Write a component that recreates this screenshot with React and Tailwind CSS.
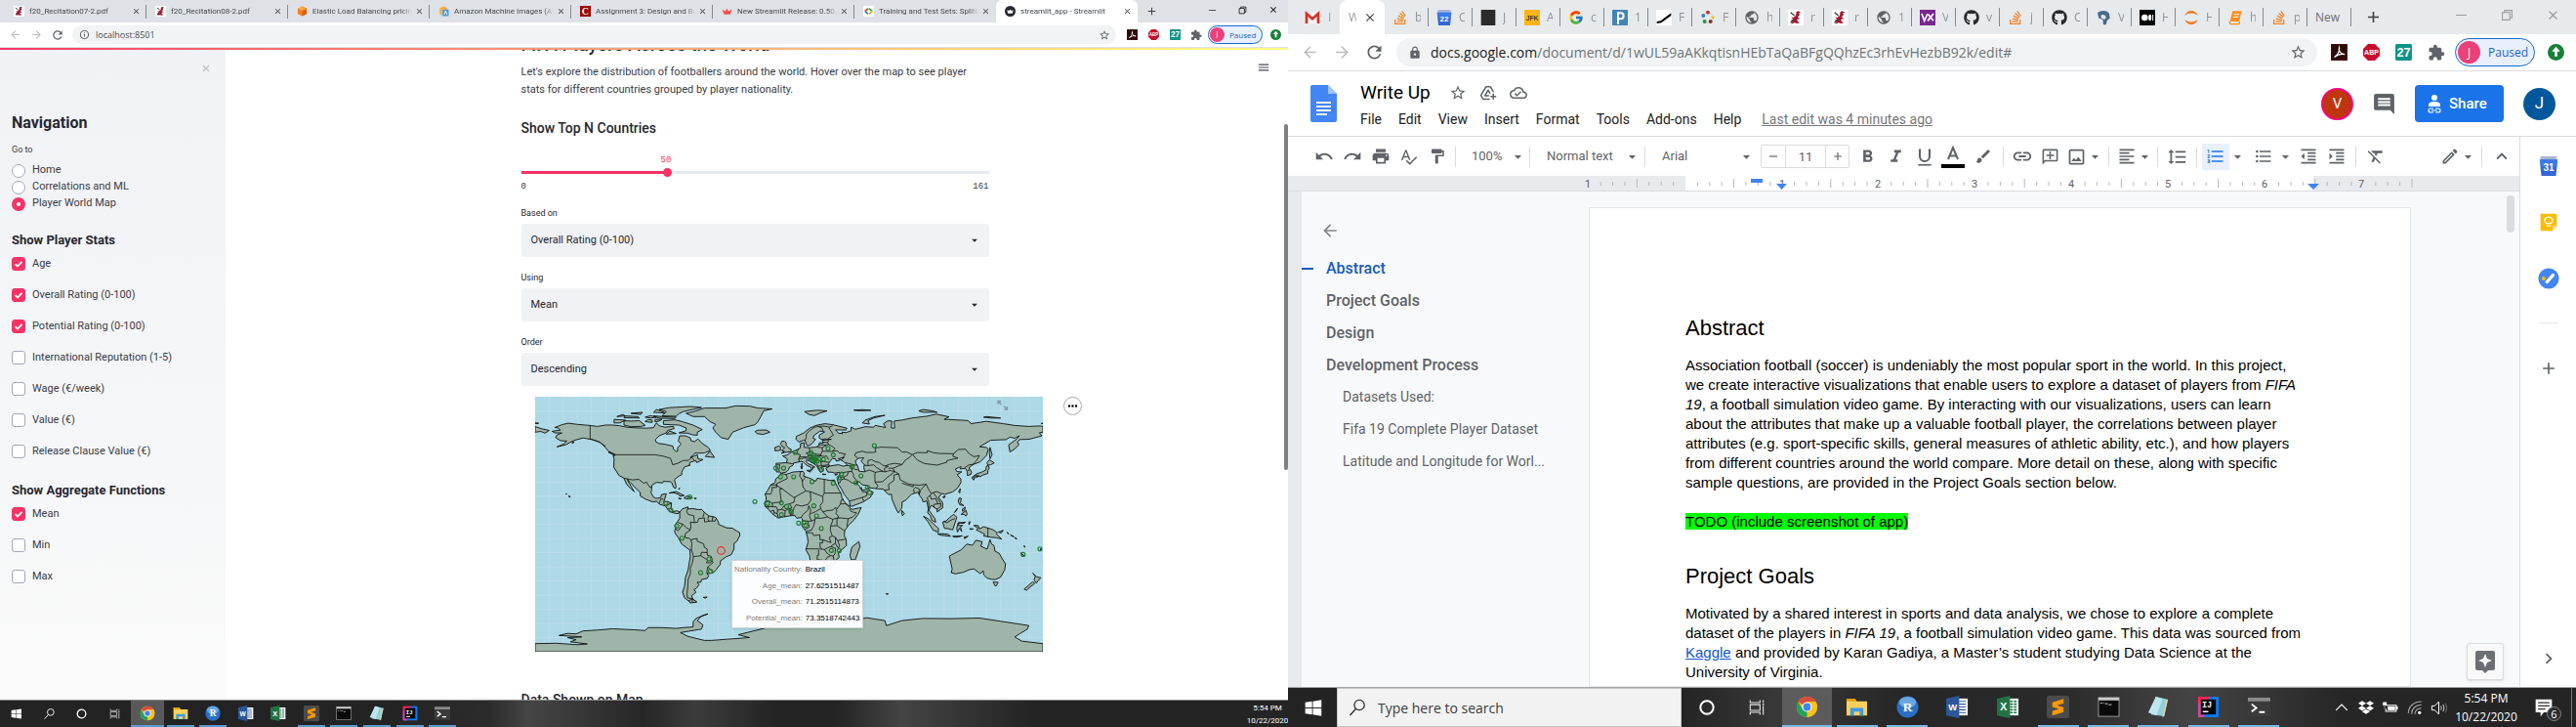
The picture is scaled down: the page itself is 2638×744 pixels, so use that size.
import React from "react";
import {
  MdUndo, MdRedo, MdPrint, MdSpellcheck, MdFormatPaint, MdFormatBold, MdFormatItalic, MdFormatAlignLeft,
  MdFormatLineSpacing, MdFormatListNumbered, MdFormatListBulleted, MdFormatIndentDecrease, MdFormatIndentIncrease,
  MdFormatClear, MdLink, MdArrowDropDown, MdExtension, MdStarBorder, MdLock, MdRefresh, MdArrowBack,
  MdArrowForward, MdAdd, MdClose, MdInfoOutline, MdOutlineCloudDone, MdAddToDrive, MdComment, MdOutlineImage,
  MdOutlineAddComment, MdOutlineEdit, MdKeyboardArrowUp, MdChevronRight, MdPublic, MdRemove, MdMenu, MdBrush,
} from "react-icons/md";
import { FaGithub, FaStackOverflow, FaDropbox } from "react-icons/fa";
import { FcGoogle } from "react-icons/fc";

/* ---------- world map ---------- */

const MAP_W = 520;
const MAP_H = 261;

function trace(points, closed) {
  const n = points.trim().split(/[\s,]+/).map(Number);
  let d = "";
  for (let i = 0; i < n.length; i += 2) {
    const x = ((n[i] + 180) / 360) * MAP_W;
    const y = ((90 - n[i + 1]) / 180) * MAP_H;
    d += (i ? "L" : "M") + x.toFixed(1) + " " + y.toFixed(1);
  }
  return closed ? d + "Z" : d;
}

const LAND = [
  "-168 65.6,-162 66.5,-164 68,-166 68.3,-161 70.3,-156.6 71.3,-150 70.5,-141 69.7,-136 69,-130 70,-125 70,-120 69.5,-115 68.5,-108 68,-101 67.8,-96 68.2,-94 71.5,-92 69.5,-88 68.5,-82 69,-81.5 67.5,-86 66.2,-87 64.5,-92 62.5,-94.5 60,-94.7 58.5,-92.5 57,-88 56.5,-82.3 55.1,-82 53,-80 51.3,-79 51.5,-79 54,-76.5 56.5,-78.5 58.8,-77.5 62.4,-73.5 62.4,-70 61,-69.5 59,-67 58.3,-64.5 60.2,-61.5 57,-57.5 54.5,-55.7 52.2,-60 50.2,-66.5 50.2,-70 47,-65 49,-64.5 46.2,-61 45.6,-65.5 43.5,-66 45,-70 43.8,-70.8 42,-70 41.7,-74 40.5,-75.5 38,-76 36.5,-76 35,-78 34,-81.2 31.5,-80 27,-80.5 25.2,-81.8 26,-83 29,-84 30,-89 30.3,-89.5 29.2,-94 29.5,-97.3 27.5,-97.5 24,-97.8 22.3,-96 19.2,-94.3 18.2,-91 18.8,-90.4 21,-87 21.5,-88 18.3,-88.8 15.9,-86 15.9,-83.3 15,-83.7 11,-82 9,-79.5 9.5,-77.5 8.6,-78.2 7.7,-80 7.5,-83 8.4,-85.7 10,-87.6 12.9,-91.4 13.9,-94 16.2,-96.5 15.7,-101.5 17.6,-105.5 20,-105.5 22.5,-109.3 26,-112.5 29.5,-114.7 31.7,-112.8 28,-110 23.5,-109.5 23,-112 25,-115 28,-117.1 32.5,-120.6 34.5,-122.5 37.5,-124.3 40.3,-124 46,-124.7 48.4,-122.8 49,-128 51.5,-130.5 54.5,-134 58,-139.9 59.8,-146 60.9,-151 59.5,-154 58.5,-158 56.2,-164.5 54.6,-160 56.5,-157.5 58.7,-162 59,-165.5 61.2,-164.5 63,-161 64.4,-166 64.5",
  "-77.5 8.6,-75.5 10.8,-71.7 12.3,-71.5 10.8,-68 11,-64 10.3,-61.9 10.5,-60 8.4,-57 6,-52 4.8,-50 1.5,-50 0,-44.5 -2.5,-40 -2.8,-37 -4.8,-35 -5.8,-34.8 -8,-37 -12,-39 -13.5,-39 -17.5,-41 -21.5,-44.5 -23,-48.5 -25.8,-48.8 -28.5,-52 -32.5,-53.8 -34.3,-57 -34.8,-58.4 -34,-57 -36.5,-58 -38.2,-62 -39,-62.5 -41,-65 -41,-63.8 -42.8,-65.5 -45,-67.5 -46.3,-65.8 -47.8,-69 -50.5,-68.3 -52.5,-66 -55,-70 -55,-74 -52,-75.5 -48,-74 -43.5,-73.5 -38,-71.5 -32,-70 -23,-70.3 -18.3,-76 -14,-78.5 -9.5,-81 -6,-81 -4.2,-80 -2.5,-81 -1,-79 2,-77.5 4.2,-77.5 7",
  "-6 35.8,-2 35.2,3 36.9,10 37.3,11 35.5,10.2 34,15.3 32.3,19 30.3,20 32.5,25 31.7,29 30.9,32.3 31.2,32.6 29.9,34 27,35.6 24,37.2 21,37.4 18.8,39.5 15.5,43 12.5,43.3 11.5,44.5 10.5,51.2 11.8,49 7,46 3,42 -1,39.5 -4.5,39.2 -8,40.6 -11,40.7 -15,35 -20,35.5 -23.5,33 -25.5,32.5 -28,28 -33,25.5 -34,20 -34.8,18.3 -33.5,15.3 -27,14.5 -22.5,12 -18,13.6 -12.5,13 -8.8,12 -5,9 -1,9.5 3.8,8.5 4.7,5.5 4.3,4 6.3,1 6,-4 5.2,-7.7 4.4,-11 6.7,-13.2 9,-15 11,-16.8 12.5,-17.5 14.7,-16.2 17,-16.3 19.5,-17 21,-15 24,-13 27.7,-9.8 29.5,-9.5 32,-6.8 34",
  "-9 38.7,-9.2 43,-1.8 43.4,-1.2 46,-4.5 48.3,-1.5 48.7,1.6 50.9,4.5 52,8 53.8,8.2 57,10.6 57.6,10.8 54.3,14 54,19 54.4,21.2 55.5,21.5 57.5,24.3 57.2,23.5 59.2,30 59.9,25 60.2,22.9 59.9,21.3 61,21.5 63,25.3 65.2,22 65.8,17.5 62.5,17 60.7,18.8 60,16.5 57,14.3 55.5,12.8 55.4,11.3 59,10.5 59.3,7 58,5 60,5.2 62,10.5 64.5,14.8 67.9,19.2 69.8,25.5 71,31 70.3,41 67.8,40.5 66.5,33 66.7,35 64.3,38 63.9,37.5 65,40.5 64.7,44 66,44 68.5,47 67,54 68.8,60 68.5,61 69.8,68.5 68.3,67 71,70 73,73 72.8,72.5 68,75 67.8,74.5 72.8,80.5 73.6,87 75,98 76.3,104.5 77.7,113.5 75.8,110 74,113 73.9,127 73.2,129 71,140 72.6,152 71,160 69.7,170 69,178 69.4,180 69,180 65,177.5 64.6,179.3 62.4,170.3 60,163.5 59.8,162 58,163 56,160 53.2,156.7 51,155.7 56,161.5 60.2,163.3 62.5,160 60.6,156.7 61.5,154 59.7,143 59.3,135.2 54.7,139.9 54.2,141.3 53,140 48.5,135.5 44,130.8 42.3,127.5 39.8,129.4 36.8,129 35.2,126.4 34.4,126.5 37,125 39.5,121.5 39,122 40.7,118 39,119 37.2,122.5 37,119.2 35,121.8 32,121.9 29.5,119.5 25.5,116 22.8,110.5 21.2,108.5 21.7,106 19,108.9 15.3,109 11.5,105 8.7,105 10.5,102.5 12.2,100.8 13.4,99.2 10,100.3 8.3,103.4 4,104 1.4,101.3 2.8,100.2 6,98.3 8,98.7 11,97.7 16.5,95 15.8,94.3 18,92.3 20.7,91.5 22.7,88.8 21.7,87 21.3,82.3 16.6,80.2 15.8,80 12,79.3 10.3,77.5 8,76.3 10,74.5 14,73 18,72.7 21.2,70.5 20.9,69 22.4,67 24.7,61.6 25.2,57.3 25.7,56.5 27.1,51.5 27.9,50 30,48 30,48 29.3,50.2 26.5,50.8 24.8,51.3 26,51.6 24.2,54 24.2,56.3 26.2,56.8 24.2,59.8 22.5,57.7 19,55.2 17.3,52.2 15.6,45 12.8,43.3 12.7,42.8 16.4,39 21.3,37.2 25,35 28.1,34.9 29.4,34.3 31.2,36 35.5,36 36.7,32.5 36.1,30.5 36.7,27.5 36.8,26.2 39.5,29 41.1,35 42,38.3 41,41.5 41.5,39 44,36.8 45.3,39.1 47.2,35 46.3,36.5 45.4,33.5 44.5,33 46.1,30.7 46.5,28.7 43.8,27.9 42.7,28.8 41.2,26.3 40.8,22.8 40.4,24 37.8,22.6 36.5,21.2 38.2,19.4 41.5,15.2 44.2,13.7 45,12.4 45.3,12.4 44,14 42.4,16 41.8,18.4 40.2,16.9 40.4,17 39,15.7 38,16 40,12.3 41.7,10.2 43.9,8.5 44.3,3.2 43.2,3 41.8,0 40,0 38.7,-2 36.8,-5.3 36.1,-6.4 36.8,-9 37",
  "-73 78.3,-66 80,-60 82,-45 82,-38 83.5,-28 83.4,-22 82,-12 81.4,-18 80,-20 76,-22 72.5,-24 70.3,-32 68.2,-40 65,-43 60,-48 61,-52 65,-54 68,-52 70.5,-56 72.5,-60 76,-68 76",
  "-24 65.5,-22 66.4,-16 66.5,-13.6 65,-18.5 63.4,-22.7 63.9",
  "-5.5 50.1,-3 50.7,1.4 51.3,1.6 52.8,0 53.5,-2 55.8,-2 57.6,-3.2 58.6,-5 58.6,-6 56.6,-4.8 54.8,-3 53.9,-4.5 52.8,-5.2 51.9,-3.2 51.4",
  "-6 52.2,-6 54.5,-7.5 55.2,-10 54.2,-10 51.8",
  "-61.5 66.8,-65 65,-65 62.8,-68 63,-72 64.3,-78 64.5,-73 66,-73 68,-78 70,-89 70.5,-89 73,-81 73.7,-76 72.5,-68 70",
  "-62 82.4,-70 83.1,-85 82.3,-92 81,-87 79.5,-90 76.5,-80 76.2,-78 78,-75 79.5",
  "-117 70,-112 68.8,-105 69,-102 69.8,-106 73,-112 72.8,-117 73",
  "-124 71.5,-124 74,-116 73.5,-120 71.5", "-80 75.5,-90 76,-96 76.5,-92 74.8,-81 74.6",
  "-106 75,-117 75.2,-116 76.4,-107 76", "-97 71.8,-102 72.5,-100 73.9,-97 73.5", "-92 72.8,-95 72.3,-95 74,-90 74",
  "-88 78.5,-96 79,-94 81,-91 80", "-84.5 65.8,-80 64,-87 63.6", "-105 77.5,-112 78.3,-104 79", "-98 75,-102 75.6,-98 76.6,-94 75.5",
  "-116 76.5,-122 76,-118 77.4", "-56 51.6,-52.8 47.2,-59.3 47.8", "-123.5 48.4,-128 50.8,-125.5 50.2",
  "-85 22,-80 23.1,-74.3 20.2,-77.5 19.9,-78 21,-82 22.3", "-74.4 18.4,-72.5 19.9,-68.5 18.6,-71.5 17.8",
  "-78.3 18.4,-76.3 18.1,-77.5 17.8", "-67.2 18.4,-65.6 18.3,-67 18", "-78 24.5,-77.5 25.5,-78.2 25",
  "49.5 -12.2,50.3 -15.8,47 -25,44 -25,43.3 -22,44.5 -16.2", "80 9.7,81.8 7.5,80.5 6,79.8 8",
  "95.3 5.6,98.5 4,103.8 -1,106 -3,105.8 -5.8,102 -4,98.5 1.8", "105.3 -6.8,108.6 -6.7,112.7 -7,114.5 -8.5,108 -7.8",
  "109 1.5,111.5 2.5,114 4.8,116.7 7,119 5,117.7 1,116 -4,113 -3.2,110.2 -2.9",
  "119.5 -5.5,120.8 -2.8,122.5 -5,121.5 -1.8,123 -.9,120.2 -.8,120.2 .9,125 1.5,124 .5,120 1.2,118.9 -2.8",
  "116 -8.4,119 -8.4,122.8 -8.2,120 -9,116.5 -9", "124 -9.2,127 -8.4,124.5 -10.2", "127.6 -.4,128.4 1.8,127.5 1.5", "128 -3.2,130.6 -3.3,129 -3.6",
  "131 -.8,134 -.9,135 -3.3,138 -1.7,144.5 -3.8,147.8 -6.1,147 -6.8,150.8 -10.5,147 -9.5,143 -9.2,138 -8.3,138.7 -7,132.8 -4,134 -2.8",
  "148.5 -5.6,151.8 -4.3,150.5 -6.2", "154.7 -5.6,155.8 -6.8,155 -6.4", "157 -7.5,159.5 -8.8,158 -8.2", "160.5 -9.3,161.5 -10.4,160 -9.8", "164.2 -20.2,166.8 -22.2,165 -21.4", "166.7 -15,167.3 -16.2,166.8 -16",
  "113.7 -22.5,115.7 -31.5,115 -34.2,118 -35,123.5 -33.9,128 -32,131 -31.5,135.6 -34.8,137.8 -32.8,138 -35.6,140.5 -38,143.5 -38.8,146.3 -39,150 -37.4,153 -32,153.5 -28,151 -24,149 -20.5,146 -19,145.3 -15,143.6 -14,142.5 -10.8,141.6 -14,140.5 -17.6,136 -15.5,137 -12.3,132.5 -11.3,130 -14.8,126 -14,122.2 -18,117 -20.7",
  "144.7 -40.8,148.3 -41,147 -43.5,146 -43.4", "172.8 -34.5,175.5 -37,178.5 -37.7,175.3 -41.6,173.8 -39.2,174.6 -36.8", "172.7 -40.6,174.2 -41.8,171 -44.3,168.4 -46.6,166.7 -45.8",
  "142 45.5,145.5 43.3,143 42,141 41.7,140.3 43.3", "141.4 41.4,142 39.5,141 38,140.8 35.7,137 34.6,135.7 33.5,133 34.3,131 34,133 35.5,137 37,139.5 38.2,140 41",
  "130 33.5,131.8 33.3,131 31.2,130 32", "132.5 33.8,134.5 34.2,133 32.8", "142.5 54.3,144 49,142.5 46.2,142 51", "121.5 25.2,121 22,120.2 23.2",
  "120.6 18.5,122.2 18.3,121.5 15,124 13,121 13.8,120 16", "122 7,125.5 9.8,126.3 7,125.5 5.8,124 7", "123 10.8,125 12,124.5 10,123 9.2", "117.2 8.3,119.5 11.3,118.5 9.4", "108.8 19.3,110.8 20,110 18.4",
  "52 71.5,57 70.7,56 73,60 75,68 76.9,61 76,54 73.5", "11 79.5,20 80.5,27 80,22 78.5,18 76.7,14 77.5", "46 80.5,52 80.8,58 80.4,50 80.1", "95 79,105 79,102 80,95 81,92 80", "138 75.5,143 75,150 75,140 76", "178.7 71,179.9 71.5,179.9 70.9",
  "-180 68.9,-175 67.3,-170 66.2,-173 64.3,-176 65.5,-180 65", "-180 71.5,-177.5 71.3,-180 70.9",
  "12.5 38,15.5 38.2,15 36.8", "8.3 41,9.7 41,9 39", "8.7 42.7,9.4 43,9.2 41.5", "23.6 35.5,26.2 35.2,24 35", "32.4 35,34.5 35.6,33.5 34.6",
  "-156 20.2,-155 19.4,-155.8 19", "-158.2 21.6,-157.5 21.3,-158 21.2", "-61 -51.6,-58 -51.4,-59.5 -52.2", "68.8 -49,70.4 -49.2,69.5 -49.6", "-154 57.8,-152.3 58,-153.5 57", "178 -17.5,179.2 -16.8,178.5 -18.2",
  "-68.5 -52.7,-65.3 -54.8,-70 -55.6,-71 -54",
  "-180 -84.3,-165 -84,-150 -85,-143 -84.5,-155 -83,-151 -81.5,-157 -80,-147 -79.5,-163 -78.5,-157 -77,-151 -77.4,-146 -75.3,-136 -74.7,-125 -73.8,-110 -74.5,-102 -75,-100 -73,-90 -73,-80 -73.5,-75 -73,-68 -72.5,-68 -69,-66 -66.5,-60 -64,-57.5 -63.3,-62 -65,-65 -68,-61 -71,-62 -74,-77 -76.5,-72 -79,-60 -82,-55 -82,-44 -81.2,-28 -80,-36 -78,-18 -73.5,-10 -71,0 -71,15 -69.5,32 -69.5,40 -68.8,48 -67.5,55 -66,68 -68,69 -71.5,80 -68,95 -66.5,115 -66.6,135 -66.2,150 -68.5,162 -70.3,170 -71.5,169 -74,164 -77,160 -79.5,165 -82.5,180 -84.3,180 -90,-180 -90",
];

const BORDERS = [
  "-51.6 4.2,-52.5 2.2,-56 2.3,-59.8 1.5,-60 4.5,-64 4,-64.8 1.5,-67 1.2,-70 1.5,-69.5 -1,-70 -4.2,-73.5 -6.5,-73.8 -9.4,-70.6 -10,-69.5 -11,-65.3 -10,-65 -12,-60.5 -13.8,-60 -16.3,-58 -17.5,-58 -20,-57.8 -22,-55.5 -22.5,-54.5 -24.5,-54.6 -25.6,-53.8 -27,-57.6 -30.2,-53.5 -33.7",
  "-71.5 12,-72.5 9,-71.5 7,-67.5 6,-67.3 3.5,-67 1.2", "-60 8.4,-60.5 7,-61 5", "-57 6,-57.5 3.5,-56.5 2", "-54 5.8,-54.5 2.3", "-78.8 1.3,-75.3 0,-73 -2.3,-70 -4.2", "-80.3 -3.5,-78.5 -4.5,-75.3 0",
  "-69.5 -11,-68.8 -14,-69.3 -17.5,-70.3 -18.3", "-69.3 -17.5,-68.5 -20,-67.8 -22.8,-64.5 -22.5,-62.6 -22.2,-62 -19.8,-58 -20", "-62.6 -22.2,-57.6 -25.4,-58.6 -27.2,-55.8 -27.3,-54.6 -25.6",
  "-67.8 -22.8,-68.5 -27,-70 -31,-70 -35,-71.5 -39,-71.7 -44,-72.3 -49,-72 -52,-68.5 -52.5,-68.6 -55", "-57.6 -30.2,-58.2 -33.5",
  "-122.8 49,-95 49,-89 48,-84 46.5,-82.5 42,-79 43,-75 45,-71 45.2,-69 47.3,-67 45", "-141 69.7,-141 60.3,-137 59,-133 57,-130 55", "-117.1 32.5,-111 31.3,-106.5 31.7,-103 29,-101 29.7,-99 26.4,-97.3 25.9",
  "-92.2 14.5,-91.5 16,-91 17.8,-89 17.8", "-89.3 14.4,-88.3 15.7", "-87.3 13,-83.2 15", "-85.6 11.1,-83.7 11", "-83 8.2,-82.6 9.6",
  "-2 35.2,-1.2 32.3,-8.7 28.7,-8.7 27.3", "-13 27.7,-8.7 27.7,-8.7 26,-12 26,-12 23.4,-13 21.3,-17 21.3", "-8.7 27.3,-4.8 25,-6.5 25,-5.5 15.5,-9.5 15.3,-12 14.8,-14.5 16.5,-16.5 16", "-4.8 25,3.2 19,4.2 19.2,12 23.5", "8.2 36.9,7.5 34,9 32,9.5 30.2", "9.5 30.2,9.8 26.5,12 23.5", "11.5 33.2,10 31,9.5 30.2",
  "12 23.5,15 23,24 19.5", "25 31.7,25 22,24 20", "25 22,36.9 22", "24 19.5,24 15.7,22 13,22.5 11,24 8.7", "24 8.7,27 9.6,31 10,33 12,34 9,33 8,35.3 5.2,34 4.2", "15 23,15.5 17,13.5 14", "3.6 11.7,5 13.8,9 12.8,13.5 14", "14 13,13.5 10,10 7,8.5 4.7",
  "2.7 6.3,2.8 9,3.6 11.7", "1.6 6.2,1.5 9,.9 11", "1.1 6,0 11", "-3 5.1,-2.8 9.5", "-5.5 10.4,-2.8 9.6,0 11,2 11.5,.5 14.5,-3 13.5,-5.5 10.4", ".5 14.5,3.5 15.5,4.2 19.2", "-7.5 4.4,-8.4 7.5,-8 10,-5.5 10.4", "-8 10,-9 12.3,-11.5 12.3,-12 14.8", "-15 11,-13.7 12.6,-11.5 12.3", "-16.7 12.4,-13.7 12.6", "-13.2 9,-11 10,-10.5 8.3,-11.4 6.8", "-10.5 8.3,-8.4 7.5",
  "14 13,15.5 10,14.5 6,16 2.2", "15.5 7.5,19 9,22.5 11", "9.7 2.3,13.2 2.2,16 2.2,18.5 3.5,18.6 4.4,22.5 4.2,27.4 5.1,24 8.7", "18.5 3.5,17.7 -.5,16 -4,12.5 -5", "13.2 2.2,14.4 -1.9,11.2 -3.9", "12.3 -6,16.5 -6,17.5 -8,21.8 -7.5,22 -11,24 -11,28.3 -12.5,29.8 -13,28.5 -9.3,30.7 -8.3", "27.4 5.1,30.8 3.5,31 2.3,29.7 -.5,29.2 -4,30.7 -8.3", "30.8 3.5,34 4.2,34 -1,29.6 -1.3", "34 4.2,36 4.5,41 4,42 4,41 -1.5", "34 -1,39.3 -4.6", "30.7 -8.3,33 -9.4", "34.5 -11.5,40.4 -10.5", "33 -9.4,32.8 -13.6,35 -17,35.8 -15,34.5 -11.5,33 -9.4", "32.8 -13.6,30.2 -15,30.4 -16",
  "25.2 -17.8,28.8 -16,30.4 -16,33 -17,32.5 -21,31.3 -22.4,29.4 -22.2,27 -20.5,25.2 -17.8", "24 -11,24 -13,22 -13,22 -16.2,23.4 -17.6,25.2 -17.8", "11.8 -17.3,14 -17.4,18.5 -17.4,23.4 -17.6", "21 -18.3,21 -22,20 -22,20 -28.4,16.5 -28.6", "20 -25,23 -25.3,25.6 -25.6,27 -23.5,29.4 -22.2", "31.3 -22.4,32 -26", "27 -29.5,29 -28.8,28.5 -30.5,27 -29.5",
  "42 4,45 5,48 8,44 9,42.8 11", "38.5 18,37 17,36.5 14.3,40 14.5,42.5 12.5", "36.5 14.3,34 10.6",
  "-8.8 41.9,-6.5 41.9,-7.2 37.2", "-1.8 43.4,3.2 42.5", "2.5 51,6 49.5,8 49,7.5 47.5,6.8 46,7.5 43.8", "7 53.3,6 51.8,6 49.5", "14.3 54,15 51,12.2 50.3,13.8 48.7,13 47.5,9.6 47.5,7.5 47.5", "6.8 46,9.6 46.5,10.4 46.8,13.7 46.5,16 46.8,17 48,13.8 48.7", "15 51,18.8 49.6,22.6 49.1,23.6 51.5,23.6 54,19.8 54.4", "17 48,22.1 48.4,22.6 49.1", "22.1 48.4,20.2 46.2,16.5 46.5", "22.1 48.4,24.9 47.8,26.6 48.3,28.2 45.5", "20.2 46.2,22.6 44.2,28.6 43.7", "22.6 44.2,23 41.4,26.3 41.7,28 42", "19 45.2,19.5 43,20.6 41,21 39", "13.7 45.5,16.5 46.5,19 45.2", "16 45,18.5 42.5", "23 41.4,20.6 41",
  "23.6 51.5,30.5 51.4,34 52,35.5 50.4,40 49.6,38.2 47.1", "23.6 54,26.6 55.7,28.2 56.2,31 54.7,32.6 53.3,30.5 51.4", "21 56.2,26.6 55.7", "24.3 57.9,27.5 57.5,28.2 56.2", "27.5 57.5,28 59.4", "27.8 60.5,31.5 62.9,29 66.9,28.5 68.5,31 69.6", "24.2 65.8,23.5 67.8,20.6 69.1", "11.3 59,12.3 61.5,12.2 63.5,14.5 66,18 68.4,20.6 69.1,25.7 69.2,28.5 68.5",
  "41.5 41.5,43.5 41.1,44.8 39.7,44.5 37.2,42.4 37.2,36.7 36.2", "40 43.5,46.5 41.8,48.5 41.8", "43.5 41.1,46.5 41.2", "44.8 39.7,46.5 38.9,48.9 38.4", "42.4 37.2,41.2 34.5,38.8 33.4,35.8 33", "38.8 33.4,39 32,37 31.5,36 29.2,35 29.4", "39 32,42 31.1,44.7 29.2,47.5 29,48.4 28.5", "44.5 37.2,46 35,45.5 33.9,47.8 31,48.5 30", "42.8 16.4,46 17.2,52 19,55 20,55.2 22.7,56 24", "52 19,53 16", "51.6 24.2,52 23,55.2 22.7",
  "53.9 37.3,57 38.2,61.2 36.6,60.8 34,61 31.5,60.9 29.8,63 27,61.6 25.2", "61.2 36.6,65 37.4,68 37,71.5 37.9,74.9 37.2,71 34,69.5 33,66.4 30,60.9 29.8", "53 41.8,56 41.3,60 42,62 40,66.5 37.4", "56 41.3,56 45,58.6 45.6,61 44.3,64 43.6,66 42,68 41,71 42.3", "68 41,70.5 40.9,67.5 39.2,68 37", "70.5 39.6,73.7 39.5,74.9 37.2", "71 42.3,75 43,80.2 42.2,73.7 39.5",
  "49 46.5,46.5 48.4,47.5 50.5,52 51.5,55 50.7,59.5 50.6,61.5 51,61 53.8,65 54.4,71 54.2,77 54,80 51,83.5 51,87.3 49.2,85.5 47.2,82.5 45.3,80.2 42.2", "87.3 49.2,91 50.6,98 50.5,98.2 52,102.3 50.5,107 49.9,116.7 49.8,120 52.7,125 53,127.5 50,131 47.7,135 48.4,133 45,131 43,130.7 42.3", "87.8 48.9,91 45.3,96 42.8,105 41.7,111.8 43.7,112 45,119.8 46.7,116 48,116.7 49.8",
  "67.5 24,71 24.4,70.5 28,74.5 31,74.4 34.7,77.8 35.5,78.8 31.5,81 30.2,85 28.3,88.1 27.9,92 27.5,97.3 28.2", "80 29,88 26.4,88.1 27.9", "74.9 37.2,77.8 35.5", "89 22,88.2 24.5,89.8 26,92.3 25,92.3 21", "97.3 28.2,95 26,93.3 24,92.3 21", "97.3 28.2,98.7 25,101 21.5,100 20.4,97.8 18.5,98.9 16.4,99.2 14,99 11", "101 21.5,102.2 22.4,105 23,108 21.6", "102.2 22.4,104 20,105 18.5,107.5 15,107.5 12.3,104.5 10.4", "100 20.4,101 17.6,104 18.3,105.5 14.4,102.5 14,102.9 11.7", "105.5 14.4,107.5 14.4", "124.4 40,128 42,130.7 42.3", "126.7 37.8,128.4 38.6", "141 -2.6,141 -9.1", "109.6 2,112 1.2,115 3,117.7 4.1",
];

const CASPIAN = "47 44.8,49.5 46.6,53 46.8,51 44.5,53.5 42,53 40,53.8 37,49.5 37.5,49 40.3,47.5 43";

/* player nationality points, longitude and latitude */
const POINTS = [
  [60.5, 55.5], [27.7, 53.4], [31.4, 48.9], [4.4, 50.7], [15.5, 50.7], [16.5, 46.6], [17.9, 47.9], [18.9, 46], [20, 44.7], [17.4, 44.7], [21.3, 46],
  [15.5, 47.5], [16.5, 45], [24.5, 45.8], [23.2, 38.7], [-9.4, 39.6], [-3.8, 39.6], [-6, 33.4], [3.3, 33.4], [16.3, 30], [31.4, 28.9], [35.4, 32.8], [37.2, 35.5],
  [44.6, 40.6], [47.5, 29.3], [51, 34.1], [55.5, 25.9], [57.1, 22.2], [-24.2, 16], [-15.2, 14.6], [-5.4, 15.1], [-1.7, 12.5], [-5.4, 6.8], [1.2, 9.1],
  [17.6, 13], [19.5, 5.9], [6.8, 0.8], [10.7, 1.3], [11.8, -0.8], [22.9, -2.9], [30, -18.5], [35.6, -18.7], [-70.3, 19.2], [-87.3, 14.8], [-83.8, 10],
  [-79.6, -1.3], [-75.9, -9.8], [-56.8, -24.5], [-62.7, -34.1], [-55.8, -33.2], [166, -21.3], [177.9, -17.4],
];

function WorldMap() {
  const grid = [];
  for (let lon = -170; lon < 180; lon += 10) grid.push(`M${(((lon + 180) / 360) * MAP_W).toFixed(1)} 0V${MAP_H}`);
  for (let lat = -80; lat < 90; lat += 10) grid.push(`M0 ${(((90 - lat) / 180) * MAP_H).toFixed(1)}H${MAP_W}`);
  return (
    <svg viewBox={`0 0 ${MAP_W} ${MAP_H}`} className="block w-full" role="img" aria-label="World map of player nationalities">
      <rect width={MAP_W} height={MAP_H} fill="#add8e6" />
      <path d={grid.join("")} stroke="#fff" strokeOpacity=".15" fill="none" strokeWidth="1" />
      <g fill="#9fb5a9" stroke="#0b0f0c" strokeWidth=".9" strokeLinejoin="round">
        {LAND.map((p, i) => <path key={i} d={trace(p, true)} />)}
        <path d={trace(CASPIAN, true)} fill="#add8e6" />
      </g>
      <g fill="none" stroke="#0b0f0c" strokeWidth=".8" strokeLinejoin="round">
        {BORDERS.map((p, i) => <path key={i} d={trace(p, false)} />)}
      </g>
      <g fill="none" stroke="#1c7a2c" strokeWidth="1.1">
        {POINTS.map(([lon, lat], i) => (
          <circle key={i} cx={((lon + 180) / 360) * MAP_W} cy={((90 - lat) / 180) * MAP_H} r="2" />
        ))}
      </g>
      <circle cx="190.5" cy="157.5" r="3.8" fill="none" stroke="#e8302c" strokeWidth="1.2" />
      <g stroke="#7c9aa5" fill="none" strokeWidth="1.3">
        <path d="M474 7.500v-3h3M474.500 5l3 3M483.500 10v3h-3M483 12.500l-3-3" />
      </g>
    </svg>
  );
}

/* ---------- small icons ---------- */

const Svg = ({ className = "size-4", box = 24, children }) => (
  <svg viewBox={`0 0 ${box} ${box}`} className={`${className} shrink-0`} aria-hidden="true">{children}</svg>
);
const Label = ({ x = 12, y = 17, size = 13, fill = "#fff", weight = 700, family = "Liberation Sans, sans-serif", children }) => (
  <text x={x} y={y} fontSize={size} fill={fill} fontWeight={weight} fontFamily={family} textAnchor="middle">{children}</text>
);

const Griffin = ({ className }) => (
  <Svg className={className}>
    <rect width="24" height="24" fill="#fff" />
    <path d="M13 3l3-1 4 2-3 1 1 3-3 3 4 4-4-1-1 3 4 3-4 1-4-1-5 2 2-4-3-2 4-1-3-4 3 1 4-3z" fill="#a31932" />
    <path d="M4 4l6 5M4 20l5-5" stroke="#3c3c3c" strokeWidth="2" />
  </Svg>
);
const Cube = ({ className }) => (
  <Svg className={className}><path d="M12 1l10 5v12l-10 5L2 18V6z" fill="#f58220" /><path d="M12 1v22l10-5V6z" fill="#d9650b" /><path d="M12 1l10 5-10 5L2 6z" fill="#fca94c" /></Svg>
);
const Ami = ({ className }) => (
  <Svg className={className}><path d="M3 5l9-4 8 4v3H8v14l-5-3z" fill="#f2a93b" /><rect x="9" y="8" width="14" height="15" rx="2" fill="#4c9ad0" /><path d="M13 19l3-8 3 8" stroke="#fff" strokeWidth="2" fill="none" /></Svg>
);
const Canvas = ({ className }) => (
  <Svg className={className}><rect width="24" height="24" fill="#990000" /><Label y={20} size={22} family="Liberation Serif, serif">C</Label></Svg>
);
const Crown = ({ className }) => (
  <Svg className={className}><path d="M1 8l7 4 4-6 3 6 8-4-4 11H6z" fill="#ff4b4b" /></Svg>
);
const Devs = ({ className }) => (
  <Svg className={className}><rect width="24" height="24" rx="3" fill="#fff" /><path d="M11 6L4 12" stroke="#ea4335" strokeWidth="4" /><path d="M4 12l7 6" stroke="#4285f4" strokeWidth="4" /><path d="M13 6l7 6" stroke="#34a853" strokeWidth="4" /><path d="M20 12l-7 6" stroke="#fbbc04" strokeWidth="4" /></Svg>
);
const StreamlitDot = ({ className }) => (
  <Svg className={className}><circle cx="12" cy="12" r="12" fill="#262730" /><path d="M5 9l4 2 3-3 3 3 4-2-2 8H7z" fill="#fff" /></Svg>
);
const Acrobat = ({ className }) => (
  <Svg className={className}><rect width="24" height="24" fill="#2b0a08" stroke="#8f1d14" /><path d="M5 19c5-3 8-9 7-14-2 5 3 10 8 10-5-1-10 0-15 4z" fill="none" stroke="#fff" strokeWidth="1.8" /></Svg>
);
const Abp = ({ className }) => (
  <Svg className={className}><path d="M7 0h10l7 7v10l-7 7H7l-7-7V7z" fill="#c70d2c" /><Label y={16} size={10}>ABP</Label></Svg>
);
const TwentySeven = ({ className }) => (
  <Svg className={className}><rect width="24" height="24" rx="2" fill="#0d9488" /><Label y={18} size={18}>27</Label></Svg>
);
const Gmail = ({ className }) => (
  <Svg className={className}><rect x="1" y="4" width="22" height="17" rx="2" fill="#f5f5f5" /><path d="M3 21V6l9 8 9-8v15" fill="none" stroke="#d93025" strokeWidth="4" /></Svg>
);
const Calendar = ({ className, day }) => (
  <Svg className={className}><path d="M2 0h20v5H2z" fill="#a9b7d3" /><path d="M1 4h22l-2 20H3z" fill="#3367d6" /><path d="M1 4h22l-1 9H2z" fill="#4285f4" opacity=".6" /><Label y={18} size={12}>{day}</Label></Svg>
);
const Update = ({ className }) => (
  <Svg className={className}><circle cx="12" cy="12" r="12" fill="#188038" /><path d="M12 4l6 7h-4v7h-4v-7H6z" fill="#fff" /></Svg>
);
const Chrome = ({ className }) => (
  <Svg className={className}>
    <circle cx="12" cy="12" r="11" fill="#fbc116" />
    <path d="M12 12L2.500 6.500A11 11 0 0 1 21.500 6.500H12z" fill="#dd4b3e" />
    <path d="M12 12L12 23A11 11 0 0 1 2.500 6.500L7.500 14.500z" fill="#1ea362" />
    <path d="M12 6.500h9.500A11 11 0 0 1 12 23l4.700-8z" fill="#fbc116" />
    <circle cx="12" cy="12" r="5.300" fill="#fff" /><circle cx="12" cy="12" r="4.100" fill="#4285f4" />
  </Svg>
);

const Windows = () => <Svg className="size-full"><path d="M3 5.500l8-1.200v7.200H3zM12 4.200L22 2.700v8.800H12zM3 12.500h8v7.200l-8-1.200zM12 12.500h10v8.800l-10-1.500z" fill="#fff" /></Svg>;
const SearchGlass = ({ color = "#fff" }) => <Svg className="size-full"><circle cx="14.500" cy="9" r="6.200" fill="none" stroke={color} strokeWidth="1.600" /><path d="M10.300 13.500L3 21.500" stroke={color} strokeWidth="1.700" /></Svg>;
const CortanaRing = () => <Svg className="size-full"><circle cx="12" cy="12" r="8" fill="none" stroke="#fff" strokeWidth="2.400" /></Svg>;
const TaskView = () => <Svg className="size-full"><path d="M4 3v3h12V3M4 21v-3h12v3M4 8.500h12v7H4zM20 3v3M20 10v11" fill="none" stroke="#e8e8e8" strokeWidth="1.300" /><path d="M19 7h2v2h-2z" fill="#e8e8e8" /></Svg>;
const Explorer = () => <Svg className="size-full"><path d="M1 3h9l2 3h11v15H1z" fill="#ffd15c" /><path d="M1 3h9l2 3H1z" fill="#e0a110" /><path d="M5 21v-8h14v8h-4v-4H9v4z" fill="#3d9be0" /></Svg>;
const RStudio = () => <Svg className="size-full"><circle cx="12" cy="12" r="11.500" fill="#2a6fc4" /><ellipse cx="12" cy="7" rx="9" ry="6" fill="#8fc1ef" opacity=".65" /><Label y={17} size={14} family="Liberation Serif, serif">R</Label></Svg>;
const Word = () => <Svg className="size-full"><rect x="12" y="3" width="11" height="18" fill="#fff" /><path d="M14 6h7M14 9h7M14 12h7M14 15h7M14 18h7" stroke="#2b579a" strokeWidth="1.200" /><path d="M0 3l14-3v24L0 21z" fill="#2b579a" /><Label x={7} y={16} size={10}>W</Label></Svg>;
const Excel = () => <Svg className="size-full"><rect x="12" y="3" width="11" height="18" fill="#fff" /><path d="M14 6h3M18 6h3M14 9h3M18 9h3M14 12h3M18 12h3M14 15h3M18 15h3M14 18h3M18 18h3" stroke="#217346" strokeWidth="1.800" /><path d="M0 3l14-3v24L0 21z" fill="#217346" /><Label x={7} y={16} size={11}>X</Label></Svg>;
const Sublime = () => <Svg className="size-full"><rect width="24" height="24" rx="2" fill="#4b4b4b" /><path d="M18 3.500v4.500l-7 2.300 7 2.200v5L6 21v-4.500l7-2.300-7-2.200V7z" fill="#ff9800" /></Svg>;
const Cmd = () => <Svg className="size-full"><rect x="1" y="2" width="22" height="20" fill="#0a0a0a" stroke="#9a9a9a" /><rect x="1" y="2" width="22" height="3" fill="#c9c9c9" /><path d="M3 8h2M6 8h1M8 8.500h3M12 9.500h3" stroke="#ddd" /></Svg>;
const Notepad = () => <Svg className="size-full"><path d="M9 1l13 3-4 18-14-2z" fill="#8ed0dc" /><path d="M9 1l7 2-6 18-9-3z" fill="#bfe6ec" /><path d="M22 4l-4 18-2 1 4-18z" fill="#e2cfa5" /></Svg>;
const IntelliJ = () => <Svg className="size-full"><path d="M1 1h14L1 16z" fill="#fe2857" /><path d="M1 14L15 1h8v22H1z" fill="#087cfa" /><path d="M1 8h7v15H1z" fill="#c9499b" /><rect x="4" y="4" width="16" height="16" fill="#000" /><Label x={10.500} y={13} size={9} family="Liberation Mono, monospace">IJ</Label><path d="M6 17h6" stroke="#fff" strokeWidth="1.500" /></Svg>;
const Console = () => <Svg className="size-full"><rect x="0" y="2" width="24" height="20" fill="#3b3b3b" /><path d="M0 2h24v4H0z" fill="#8b8b8b" /><path d="M4 9l5 4-5 4M12 17.500h6" stroke="#fff" strokeWidth="2" fill="none" /></Svg>;

const Apps = [
  { name: "Chrome", Icon: () => <Chrome className="size-full" />, running: true, active: true },
  { name: "File Explorer", Icon: Explorer, running: true },
  { name: "RStudio", Icon: RStudio, running: true },
  { name: "Word", Icon: Word },
  { name: "Excel", Icon: Excel },
  { name: "Sublime Text", Icon: Sublime, running: true },
  { name: "Command Prompt", Icon: Cmd, running: true },
  { name: "Notepad", Icon: Notepad, running: true },
  { name: "IntelliJ IDEA", Icon: IntelliJ, running: true },
  { name: "Console", Icon: Console, running: true },
];

/* ---------- left window ---------- */

const leftTabs = [
  { title: "f20_Recitation07-2.pdf", Icon: Griffin },
  { title: "f20_Recitation08-2.pdf", Icon: Griffin },
  { title: "Elastic Load Balancing pricing", Icon: Cube },
  { title: "Amazon Machine Images (AMI)", Icon: Ami },
  { title: "Assignment 3: Design and Build", Icon: Canvas },
  { title: "New Streamlit Release: 0.50.0", Icon: Crown },
  { title: "Training and Test Sets: Splitting", Icon: Devs },
  { title: "streamlit_app - Streamlit", Icon: StreamlitDot, active: true },
];

function Restore({ className }) {
  return <Svg className={className} box={12}><path d="M1.500 3.500h7v7h-7zM3.500 3.500v-2h7v7h-2" fill="none" stroke="currentColor" strokeWidth="1" /></Svg>;
}

function LeftChrome() {
  return (
    <header className="shrink-0">
      <div className="flex h-[23px] bg-[#dee1e6] pl-[5px] text-[8px] text-[#45494d]">
        {leftTabs.map((t, i) => (
          <div key={i} className={t.active ? "flex w-[145px] items-center rounded-t-md bg-white pr-[6px] pl-[9px]" : "flex w-[145px] items-center pr-[6px] pl-[9px]"}>
            <a href="#tab" className="flex min-w-0 flex-1 items-center gap-[5px]">
              <t.Icon className="size-[11px]" />
              <span className="flex-1 overflow-hidden [font-family:Roboto,sans-serif] whitespace-nowrap [mask-image:linear-gradient(to_right,black_90%,transparent)]">{t.title}</span>
            </a>
            <button aria-label="Close tab" className="ml-[3px] text-[#3c4043]"><MdClose className="size-[9px]" /></button>
            {!t.active && i < 6 && <span className="-mr-[6px] ml-[5px] h-[14px] w-px bg-[#85898d]" />}
          </div>
        ))}
        <button aria-label="New tab" className="ml-[8px] text-[#3c4043]"><MdAdd className="size-[13px]" /></button>
        <div className="ml-auto flex text-black">
          <button aria-label="Minimize" className="grid w-[31px] place-items-center pb-[3px]"><span className="h-px w-[7px] bg-[#555]" /></button>
          <button aria-label="Restore" className="grid w-[31px] place-items-center pb-[3px]"><Restore className="size-[9px]" /></button>
          <button aria-label="Close" className="grid w-[31px] place-items-center pb-[3px]"><MdClose className="size-[10px]" /></button>
        </div>
      </div>
      <div className="flex h-[26px] items-center border-b border-[#dee1e6] bg-white pl-[4px] text-[#5f6368]">
        <button aria-label="Back" className="grid w-[22px] place-items-center text-[#babcbe]"><MdArrowBack className="size-[13px]" /></button>
        <button aria-label="Forward" className="grid w-[22px] place-items-center text-[#babcbe]"><MdArrowForward className="size-[13px]" /></button>
        <button aria-label="Reload" className="grid w-[22px] place-items-center"><MdRefresh className="size-[14px]" /></button>
        <div className="ml-[4px] flex h-[19px] flex-1 items-center rounded-full bg-[#f1f3f4] pr-[6px] pl-[7px]">
          <MdInfoOutline className="size-[11px]" />
          <input aria-label="Address" defaultValue="localhost:8501" className="ml-[6px] min-w-0 flex-1 bg-transparent text-[9px] text-[#4a4d51] outline-none" />
          <MdStarBorder className="size-[12px]" />
        </div>
        <div className="ml-[5px] flex">
          <span className="grid w-[22px] place-items-center"><Acrobat className="size-[11px]" /></span>
          <span className="grid w-[22px] place-items-center"><Abp className="size-[11px]" /></span>
          <span className="grid w-[22px] place-items-center"><TwentySeven className="size-[11px]" /></span>
          <span className="grid w-[22px] place-items-center"><MdExtension className="size-[12px]" /></span>
        </div>
        <button className="ml-px flex h-[19px] w-[56px] items-center gap-[5px] rounded-full border border-[#1967d2] bg-[#e8f0fe] pl-px text-[8px] text-[#1f63c9]">
          <span className="grid size-[15px] place-items-center rounded-full bg-[#ec407a] text-[7px] text-white">J</span>Paused
        </button>
        <span className="grid w-[26px] place-items-center"><Update className="size-[11px]" /></span>
      </div>
    </header>
  );
}

function Check({ label, on }) {
  return (
    <label className="flex h-4 items-center gap-[7px]">
      <span className="grid size-[14px]">
        <input type="checkbox" defaultChecked={on} className="peer size-[14px] appearance-none rounded-[3px] border border-[#a3a8b8] bg-white [grid-area:1/1] checked:border-[#f63366] checked:bg-[#f63366]" />
        <svg viewBox="0 0 14 14" className="pointer-events-none hidden size-[14px] [grid-area:1/1] peer-checked:block" aria-hidden="true"><path d="M3.500 7.200l2.500 2.300 4.500-4.700" fill="none" stroke="#fff" strokeWidth="1.800" /></svg>
      </span>
      {label}
    </label>
  );
}

function Radio({ label, on }) {
  return (
    <label className="flex h-[17px] items-center gap-[7px]">
      <input type="radio" name="page" defaultChecked={on} className="size-[14px] appearance-none rounded-full border border-[#a3a8b8] bg-white checked:border-[5px] checked:border-[#f63366]" />
      {label}
    </label>
  );
}

function SelectField({ id, label, options }) {
  return (
    <div className="mt-[15px] flex flex-col">
      <label htmlFor={id} className="text-[9px] leading-[12px]">{label}</label>
      <div className="relative mt-[5px]">
        <select id={id} className="block h-[34px] w-full appearance-none rounded-[3px] bg-[#f0f2f6] pl-[10px] text-[11px]">
          {options.map((o) => <option key={o}>{o}</option>)}
        </select>
        <MdArrowDropDown className="pointer-events-none absolute top-[10px] right-[8px] size-[14px]" />
      </div>
    </div>
  );
}

function Streamlit() {
  return (
    <div className="flex min-h-0 flex-1 text-[#262730] [font-family:Roboto,'Open_Sans',sans-serif]">
      <aside className="flex w-[231px] shrink-0 flex-col bg-linear-to-b from-[#f0f2f6] to-[#fafafa] pl-[12px] text-[11px] text-[#3a3c46]">
        <button aria-label="Close sidebar" className="mt-[13px] mr-[14px] self-end text-[#b4b7bf]"><MdClose className="size-[12px]" /></button>
        <h2 className="mt-[40px] text-[16px] leading-[20px] font-bold text-[#262730]">Navigation</h2>
        <fieldset className="mt-[11px]">
          <legend className="mb-[7px] text-[9px] leading-[12px]">Go to</legend>
          <Radio label="Home" />
          <Radio label="Correlations and ML" />
          <Radio label="Player World Map" on />
        </fieldset>
        <h3 className="mt-[20px] text-[13px] leading-[18px] font-bold text-[#262730]">Show Player Stats</h3>
        <div className="mt-[7px] flex flex-col gap-4">
          <Check label="Age" on />
          <Check label="Overall Rating (0-100)" on />
          <Check label="Potential Rating (0-100)" on />
          <Check label="International Reputation (1-5)" />
          <Check label="Wage (€/week)" />
          <Check label="Value (€)" />
          <Check label="Release Clause Value (€)" />
        </div>
        <h3 className="mt-[23px] text-[13px] leading-[18px] font-bold text-[#262730]">Show Aggregate Functions</h3>
        <div className="mt-[7px] flex flex-col gap-4">
          <Check label="Mean" on />
          <Check label="Min" />
          <Check label="Max" />
        </div>
      </aside>

      <main className="relative min-w-0 flex-1 overflow-hidden bg-white">
        <button aria-label="Menu" className="absolute top-[11px] right-[14px] text-[#4a4b52]"><MdMenu className="size-[14px]" /></button>
        <div className="mx-auto w-[479px]">
          <h1 className="-mt-[18px] text-[19px] leading-[26px] font-medium">FIFA Players Across the World</h1>
          <p className="mt-[6px] text-[11px] leading-[18px] text-[#3a3c46]">
            Let's explore the distribution of footballers around the world. Hover over the map to see player stats for different countries grouped by player nationality.
          </p>
          <h3 className="mt-[20px] text-[14px] leading-[20px] font-medium">Show Top N Countries</h3>
          <div className="mt-[17px] [font-family:'Liberation_Mono',monospace] text-[9px] leading-[12px] text-[#3a3c46]">
            <output htmlFor="topn" className="ml-[31%] block w-fit -translate-x-1/2 text-[#f63366]">50</output>
            <input id="topn" type="range" min="0" max="161" defaultValue="50" aria-label="Top N countries"
              className="mt-[2px] block h-[9px] w-full appearance-none bg-[linear-gradient(to_right,#f63366_31%,#e6eaf1_31%)] bg-[length:100%_3px] bg-center bg-no-repeat [&::-webkit-slider-thumb]:size-[9px] [&::-webkit-slider-thumb]:appearance-none [&::-webkit-slider-thumb]:rounded-full [&::-webkit-slider-thumb]:bg-[#f63366]" />
            <div className="mt-[4px] flex justify-between"><span>0</span><span>161</span></div>
          </div>
          <SelectField id="based" label="Based on" options={["Overall Rating (0-100)", "Age", "Potential Rating (0-100)"]} />
          <SelectField id="using" label="Using" options={["Mean", "Min", "Max"]} />
          <SelectField id="order" label="Order" options={["Descending", "Ascending"]} />
          <div className="mt-[11px] ml-[14px] flex w-max items-start gap-[21px]">
            <div className="relative w-[520px]">
              <WorldMap />
              <table className="absolute top-[167px] left-[201px] h-[70px] w-[135px] rounded-[2px] border border-[#d0d4d6] bg-white/95 [font-family:'Liberation_Sans',sans-serif] text-[8px] leading-[14px] shadow-sm">
                <tbody>
                  {[["Nationality Country:", "Brazil"], ["Age_mean:", "27.6251511487"], ["Overall_mean:", "71.2515114873"], ["Potential_mean:", "73.3518742443"]].map(([k, v]) => (
                    <tr key={k}>
                      <th className="text-right font-normal whitespace-nowrap text-[#808080]">{k}</th>
                      <td className="pl-[3px] text-black">{v}</td>
                    </tr>
                  ))}
                </tbody>
              </table>
            </div>
            <button aria-label="Chart actions" className="grid size-[19px] place-items-center rounded-full border border-[#aaa]">
              <svg viewBox="0 0 14 14" className="size-[11px]"><circle cx="2.500" cy="7" r="1.500" /><circle cx="7" cy="7" r="1.500" /><circle cx="11.500" cy="7" r="1.500" /></svg>
            </button>
          </div>
          <h3 className="mt-[39px] text-[14px] leading-[20px] font-medium">Data Shown on Map</h3>
        </div>
      </main>
      <div className="w-[4px] shrink-0 bg-white pt-[76px]"><div className="h-[354px] rounded-full bg-[#808080]" /></div>
    </div>
  );
}

function LeftTaskbar() {
  return (
    <footer className="flex h-[28px] shrink-0 border-t border-[#858585] bg-[linear-gradient(to_right,#232323_30%,#2c2c2c_38%,#454545_41%,#262626_50%,#3c3c3c_54%,#242424_60%,#242424_65%,#444_70%,#242424_80%)]">
      <div className="grid w-[470px] grid-cols-14">
        {[["Start", Windows], ["Search", SearchGlass], ["Cortana", CortanaRing], ["Task View", TaskView]].map(([name, Icon]) => (
          <button key={name} aria-label={name} className="grid place-items-center"><span className="size-[13px]"><Icon /></span></button>
        ))}
        {Apps.map(({ name, Icon, running, active }) => (
          <button key={name} aria-label={name} className={active ? "grid grid-rows-[1fr_2px] justify-items-center bg-[#595959]" : "grid grid-rows-[1fr_2px] justify-items-center"}>
            <span className="size-[16px] self-center"><Icon /></span>
            <span className={active ? "w-full bg-[#5b9bd0]" : running ? "w-[28px] bg-[#5b9bd0]" : ""} />
          </button>
        ))}
      </div>
      <time className="ml-auto flex w-[42px] flex-col items-center justify-center text-[8px] leading-[13px] [font-family:Roboto,sans-serif] text-white"><span>5:54 PM</span><span>10/22/2020</span></time>
    </footer>
  );
}

/* ---------- right window ---------- */

const So = ({ className }) => <FaStackOverflow className={`${className} shrink-0 text-[#f48024]`} />;
const Gh = ({ className }) => <FaGithub className={`${className} shrink-0 text-[#24292e]`} />;
const Globe = ({ className }) => <MdPublic className={`${className} shrink-0 text-[#5f6368]`} />;
const GoogleG = ({ className }) => <FcGoogle className={`${className} shrink-0`} />;
const Cal22 = ({ className }) => <Calendar className={className} day="22" />;
const Black = ({ className }) => <Svg className={className}><rect x="1" width="22" height="24" fill="#2b2b2b" /></Svg>;
const Jfk = ({ className }) => <Svg className={className}><rect width="24" height="24" fill="#fdb515" /><Label y={16} size={10} fill="#3a3a3a">JFK</Label></Svg>;
const Pee = ({ className }) => <Svg className={className}><rect width="24" height="24" rx="1" fill="#4584b6" /><path d="M9 22V5h4a4.500 4.500 0 0 1 0 9H9" fill="none" stroke="#fff" strokeWidth="3" /></Svg>;
const Slash = ({ className }) => <Svg className={className}><rect width="24" height="24" fill="#fff" /><path d="M1 18l6-1L23 5v4L8 20l-7 1z" fill="#000" /></Svg>;
const Ring = ({ className }) => <Svg className={className}><circle cx="12" cy="12" r="8" fill="none" stroke="#ccc" /><circle cx="5" cy="9" r="3" fill="#3f7ec2" /><circle cx="12" cy="4" r="3" fill="#c0392b" /><path d="M16 10h7l-3 5z" fill="#f1c40f" /><circle cx="7" cy="18" r="3" fill="#2d8a4e" /><circle cx="16" cy="18" r="3" fill="#8e3030" /></Svg>;
const Vx = ({ className }) => <Svg className={className}><rect width="24" height="24" fill="#7b2590" /><path d="M3 6l4 11 5-11M12 17L21 6M13 7l8 10" fill="none" stroke="#fff" strokeWidth="2.600" /></Svg>;
const Elephant = ({ className }) => <Svg className={className}><path d="M3 5c5-5 15-5 18 1l1 7-4 3-2 7h-4l-1-8-6-2z" fill="#4b6a8a" /><path d="M8 9c3-3 8-1 8 3l-2 3-5-2z" fill="#dce6ee" /></Svg>;
const Medium = ({ className }) => <Svg className={className}><rect width="24" height="24" fill="#000" /><circle cx="8" cy="12" r="5" fill="#fff" /><ellipse cx="16" cy="12" rx="2.300" ry="5" fill="#fff" /><path d="M20.500 7.500v9" stroke="#fff" strokeWidth="1.500" /></Svg>;
const Jupyter = ({ className }) => <Svg className={className}><path d="M2 9c3-10 17-10 20 0-5-5-15-5-20 0zM2 15c3 10 17 10 20 0-5 5-15 5-20 0z" fill="#f37726" /></Svg>;
const Book = ({ className }) => <Svg className={className}><path d="M8 2h14l-4 16H4z" fill="#ff8c1a" /><path d="M4 18c-1 3 0 4 2 4h12l1-4" fill="none" stroke="#ff8c1a" strokeWidth="2" /><path d="M10 7h8M9 11h8" stroke="#fff" strokeWidth="1.500" /></Svg>;

const rightTabs = [
  [So, "b"], [Cal22, "C"], [Black, "J"], [Jfk, "A"], [GoogleG, "c"], [Pee, "1"], [Slash, "F"], [Ring, "F"], [Globe, "h"], [Griffin, "r"], [Griffin, "r"],
  [Globe, "1"], [Vx, "V"], [Gh, "v"], [So, "j"], [Gh, "C"], [Elephant, "V"], [Medium, "H"], [Jupyter, "H"], [Book, "h"], [So, "p"],
];

function RightChrome() {
  return (
    <header className="shrink-0">
      <div className="flex h-[35px] bg-[#e7eaed] pl-[8px] text-[12px] text-[#6b6f73]">
        <a href="#tab" aria-label="Inbox" className="flex w-[45px] items-center gap-[8px] pl-[9px]"><Gmail className="size-4" /><span className="w-[6px] overflow-hidden opacity-60">I</span></a>
        <div className="flex w-[46px] items-center rounded-t-lg bg-white pl-[9px]">
          <a href="#tab" className="w-[8px] overflow-hidden opacity-70">W</a>
          <button aria-label="Close tab" className="ml-[7px] text-[#3c4043]"><MdClose className="size-[14px]" /></button>
        </div>
        {rightTabs.map(([Icon, letter], i) => (
          <a key={i} href="#tab" className="flex w-[45px] items-center pl-[8px]">
            <Icon className="size-4" />
            <span className="ml-[7px] w-[6px] overflow-hidden opacity-70">{letter}</span>
            <span className="ml-auto h-[19px] w-px bg-[#85898d]" />
          </a>
        ))}
        <a href="#tab" className="flex w-[45px] items-center pl-[8px]">New<span className="ml-auto h-[19px] w-px bg-[#85898d]" /></a>
        <button aria-label="New tab" className="ml-[13px] text-[#3c4043]"><MdAdd className="size-[19px]" /></button>
        <div className="ml-auto flex text-[#9a9da0]">
          <button aria-label="Minimize" className="grid w-[47px] place-items-center pb-[5px]"><span className="h-px w-[11px] bg-[#9a9da0]" /></button>
          <button aria-label="Restore" className="grid w-[47px] place-items-center pb-[5px]"><Restore className="size-[13px]" /></button>
          <button aria-label="Close" className="grid w-[47px] place-items-center pb-[5px]"><MdClose className="size-[15px]" /></button>
        </div>
      </div>
      <div className="flex h-[38px] items-center border-b border-[#dadce0] bg-white pl-[6px] text-[#5f6368]">
        <button aria-label="Back" className="grid w-[33px] place-items-center text-[#babcbe]"><MdArrowBack className="size-[19px]" /></button>
        <button aria-label="Forward" className="grid w-[33px] place-items-center text-[#babcbe]"><MdArrowForward className="size-[19px]" /></button>
        <button aria-label="Reload" className="grid w-[33px] place-items-center"><MdRefresh className="size-[21px]" /></button>
        <div className="ml-[6px] flex h-[29px] flex-1 items-center rounded-full bg-[#f1f3f4] pr-[11px] pl-[12px]">
          <MdLock className="size-[14px]" />
          <div className="ml-[9px] flex-1 text-[14px] text-[#6f7378]"><span className="text-[#202124]">docs.google.com</span>/document/d/1wUL59aAKkqtisnHEbTaQaBFgQQhzEc3rhEvHezbB92k/edit#</div>
          <MdStarBorder className="size-[17px]" />
        </div>
        <div className="ml-[6px] flex">
          <span className="grid w-[33px] place-items-center"><Acrobat className="size-[17px]" /></span>
          <span className="grid w-[33px] place-items-center"><Abp className="size-[17px]" /></span>
          <span className="grid w-[33px] place-items-center"><TwentySeven className="size-[17px]" /></span>
          <span className="grid w-[33px] place-items-center"><MdExtension className="size-[18px]" /></span>
        </div>
        <button className="ml-[3px] flex h-[29px] w-[82px] items-center gap-[8px] rounded-full border border-[#1967d2] bg-[#e8f0fe] pl-[2px] text-[12px] text-[#1f63c9]">
          <span className="grid size-[23px] place-items-center rounded-full bg-[#ec407a] text-[12px] text-white">J</span>Paused
        </button>
        <span className="grid w-[42px] place-items-center"><Update className="size-[17px]" /></span>
      </div>
    </header>
  );
}

function DocsHeader() {
  return (
    <div className="flex h-[67px] shrink-0 items-center border-b border-[#dadce0] bg-white pr-[21px] pl-[23px] [font-family:Roboto,sans-serif]">
      <svg viewBox="0 0 27 38" className="h-[38px] w-[27px]" aria-hidden="true">
        <path d="M2 0h16l9 9v27a2 2 0 0 1-2 2H2a2 2 0 0 1-2-2V2a2 2 0 0 1 2-2z" fill="#4285f4" /><path d="M18 0l9 9h-9z" fill="#a1c2fa" />
        <path d="M6 18h15M6 22h15M6 26h15M6 30h11" stroke="#f1f1f1" strokeWidth="2" />
      </svg>
      <div className="mt-[3px] ml-[24px] flex flex-col">
        <div className="flex items-center text-[#5f6368]">
          <h1 className="text-[19px] leading-[24px] text-black">Write Up</h1>
          <button aria-label="Star" className="ml-[19px]"><MdStarBorder className="size-[18px]" /></button>
          <button aria-label="Add to Drive" className="ml-[13px]"><MdAddToDrive className="size-[18px]" /></button>
          <button aria-label="Saved" className="ml-[13px]"><MdOutlineCloudDone className="size-[18px]" /></button>
        </div>
        <nav className="mt-[4px] flex gap-[17px] text-[14px] leading-[22px] text-[#202124]">
          {["File", "Edit", "View", "Insert", "Format", "Tools", "Add-ons", "Help"].map((m) => <button key={m}>{m}</button>)}
          <a href="#history" className="ml-[4px] text-[#777] underline">Last edit was 4 minutes ago</a>
        </nav>
      </div>
      <div className="ml-auto flex items-center">
        <span className="grid size-[33px] place-items-center rounded-full border-2 border-[#ff0080] bg-[#bf360c] text-[15px] text-white">V</span>
        <button aria-label="Comments" className="ml-[19px] text-[#5f6368]"><MdComment className="size-[25px]" /></button>
        <button className="ml-[19px] flex h-[38px] w-[91px] items-center gap-[7px] rounded-[4px] bg-[#1a73e8] pl-[12px] text-[15px] font-medium text-white">
          <svg viewBox="0 0 16 22" className="h-[22px] w-[16px]" aria-hidden="true"><circle cx="8" cy="5" r="3" fill="#fff" /><path d="M2 14v-2c0-4 12-4 12 0v2z" fill="#fff" /><path d="M7 16H4a2 2 0 0 0 0 4h3M9 16h3a2 2 0 0 1 0 4H9M5 18h6" fill="none" stroke="#fff" strokeWidth="1.200" /></svg>
          Share
        </button>
        <span className="ml-[20px] grid size-[33px] place-items-center rounded-full bg-[#01579b] text-[17px] text-white">J</span>
      </div>
    </div>
  );
}

const Sep = () => <span className="h-[21px] w-px shrink-0 bg-[#dadce0]" />;
function Tool({ label, wide, children }) {
  return <button aria-label={label} className={wide ? "flex w-[41px] shrink-0 items-center justify-center" : "grid w-[29px] shrink-0 place-items-center"}>{children}</button>;
}
const Caret = () => <MdArrowDropDown className="size-[17px] shrink-0" />;

function Toolbar() {
  return (
    <div className="flex h-[40px] shrink-0 items-center bg-white pl-[22px] text-[13px] text-[#5f6368] [font-family:Roboto,sans-serif]">
      <Tool label="Undo"><MdUndo className="size-[20px]" /></Tool>
      <Tool label="Redo"><MdRedo className="size-[20px]" /></Tool>
      <Tool label="Print"><MdPrint className="size-[20px]" /></Tool>
      <Tool label="Spelling"><MdSpellcheck className="size-[19px]" /></Tool>
      <Tool label="Paint format"><MdFormatPaint className="size-[18px]" /></Tool>
      <span className="w-[4px]" /><Sep />
      <button className="flex w-[75px] items-center justify-between pr-[3px] pl-[16px]">100%<Caret /></button>
      <Sep />
      <button className="flex w-[117px] items-center justify-between pr-[4px] pl-[17px]">Normal text<Caret /></button>
      <Sep />
      <button className="flex w-[118px] items-center justify-between pr-[6px] pl-[17px]">Arial<Caret /></button>
      <div className="flex h-[24px] w-[91px] shrink-0 items-center rounded-[2px] border border-[#dadce0]">
        <button aria-label="Smaller" className="grid w-[24px] place-items-center"><MdRemove className="size-[14px]" /></button>
        <input aria-label="Font size" defaultValue="11" className="h-full w-[42px] border-x border-[#dadce0] text-center outline-none" />
        <button aria-label="Larger" className="grid flex-1 place-items-center"><MdAdd className="size-[14px]" /></button>
      </div>
      <span className="w-[4px]" />
      <Tool label="Bold"><MdFormatBold className="size-[21px]" /></Tool>
      <Tool label="Italic"><MdFormatItalic className="size-[21px]" /></Tool>
      <Tool label="Underline"><Svg className="size-[20px]"><path d="M6 3v9a6 6 0 0 0 12 0V3" fill="none" stroke="currentColor" strokeWidth="2.500" /><path d="M4 22.500h16" stroke="currentColor" strokeWidth="2" /></Svg></Tool>
      <Tool label="Text colour"><Svg className="size-[24px]"><path d="M7 15l5-12 5 12M8.500 11.500h7" fill="none" stroke="currentColor" strokeWidth="2" /><path d="M0 20h24v4H0z" fill="#000" /></Svg></Tool>
      <span className="w-[2px]" />
      <Tool label="Highlight"><MdBrush className="size-[18px]" /></Tool>
      <span className="w-[6px]" /><Sep /><span className="w-[4px]" />
      <Tool label="Link"><MdLink className="size-[22px]" /></Tool>
      <Tool label="Comment"><MdOutlineAddComment className="size-[19px] -scale-x-100" /></Tool>
      <Tool label="Image" wide><MdOutlineImage className="size-[21px]" /><Caret /></Tool>
      <span className="w-[4px]" /><Sep /><span className="w-[6px]" />
      <Tool label="Align" wide><MdFormatAlignLeft className="size-[20px]" /><Caret /></Tool>
      <span className="w-[2px]" /><Sep /><span className="w-[5px]" />
      <Tool label="Line spacing"><MdFormatLineSpacing className="size-[21px]" /></Tool>
      <span className="w-[5px]" /><Sep /><span className="w-[5px]" />
      <button aria-label="Numbered list" className="grid h-[27px] w-[28px] place-items-center bg-[#e8f0fe] text-[#1a73e8]"><MdFormatListNumbered className="size-[20px]" /></button>
      <Caret /><span className="w-[3px]" />
      <Tool label="Bulleted list"><MdFormatListBulleted className="size-[20px]" /></Tool>
      <Caret />
      <Tool label="Decrease indent"><MdFormatIndentDecrease className="size-[20px]" /></Tool>
      <Tool label="Increase indent"><MdFormatIndentIncrease className="size-[20px]" /></Tool>
      <span className="w-[5px]" /><Sep /><span className="w-[5px]" />
      <Tool label="Clear formatting"><MdFormatClear className="size-[20px]" /></Tool>
      <div className="ml-auto flex items-center pr-[4px]">
        <Tool label="Editing mode" wide><MdOutlineEdit className="size-[20px]" /><Caret /></Tool>
        <span className="w-[3px]" /><Sep /><span className="w-[5px]" />
        <Tool label="Hide menus"><MdKeyboardArrowUp className="size-[22px]" /></Tool>
      </div>
    </div>
  );
}

function Ruler() {
  const ticks = [];
  for (let i = -7; i <= 60; i++) {
    if (i === 0 || i % 8 === 0) continue;
    const x = 407 + i * 12.4;
    if (x > 1180) continue;
    ticks.push({ x, tall: i % 4 === 0 });
  }
  const numbers = [[307, "1"], [506, "1"], [604, "2"], [703, "3"], [802, "4"], [901, "5"], [1000, "6"], [1099, "7"]];
  return (
    <svg viewBox="0 0 1262 16" preserveAspectRatio="xMinYMin slice" className="block h-[16px] w-full shrink-0 bg-[#e8eaed]" aria-hidden="true">
      <path d="M407 0h643v16H407z" fill="#fff" />
      {ticks.map((t, i) => <path key={i} d={t.tall ? `M${t.x} 3v9` : `M${t.x} 6v4`} stroke="#b5b8bc" />)}
      {numbers.map(([x, n], i) => <text key={i} x={x} y="12" fontSize="11" textAnchor="middle" fill="#5f6368" fontFamily="Roboto, sans-serif">{n}</text>)}
      <path d="M474 3h12v4h-12zM500 8h11l-5.500 6zM1044 8h12l-6 6z" fill="#4285f4" />
      <path d="M0 15.500h1262" stroke="#dadce0" />
    </svg>
  );
}

function Outline() {
  return (
    <nav className="w-[308px] shrink-0 border-l-[14px] border-[#e8eaed] pt-[30px] text-[#5f6368] [font-family:Roboto,sans-serif]">
      <button aria-label="Close outline" className="ml-[19px] block text-[#80868b]"><MdArrowBack className="size-[20px]" /></button>
      <ul className="mt-[12px] text-[16px] leading-[33px] font-medium">
        <li className="flex items-center text-[#185abc]"><span className="mr-[13px] h-[2px] w-[12px] bg-[#185abc]" /><a href="#abstract">Abstract</a></li>
        <li className="pl-[25px]"><a href="#goals">Project Goals</a></li>
        <li className="pl-[25px]"><a href="#design">Design</a></li>
        <li className="pl-[25px]"><a href="#process">Development Process</a></li>
      </ul>
      <ul className="pl-[42px] text-[14px] leading-[33px]">
        <li><a href="#datasets">Datasets Used:</a></li>
        <li><a href="#fifa">Fifa 19 Complete Player Dataset</a></li>
        <li><a href="#latlong">Latitude and Longitude for Worl...</a></li>
      </ul>
    </nav>
  );
}

function Docs() {
  return (
    <div className="flex min-h-0 flex-1">
      <div className="flex min-w-0 flex-1 flex-col">
        <Toolbar />
        <Ruler />
        <div className="relative flex min-h-0 flex-1 overflow-hidden bg-[#f8f9fb]">
          <Outline />
          <article className="mt-[16px] w-[842px] shrink-0 border border-[#e4e6e9] bg-white px-[98px] pt-[110px] [font-family:'Liberation_Sans',Arial,sans-serif] text-[15px] leading-[20px] text-black">
            <h2 className="text-[22px] leading-[26px]">Abstract</h2>
            <p className="mt-[15px]">
              Association football (soccer) is undeniably the most popular sport in the world. In this project, we{"\u00a0"}create interactive visualizations that enable users to explore a dataset of players from <i>FIFA 19</i>,{"\u00a0"}a{"\u00a0"}football simulation video game. By interacting with our visualizations, users can learn about{"\u00a0"}the attributes that make up a valuable football player, the correlations between player attributes (e.g. sport-specific skills, general measures of athletic ability, etc.), and how players from{"\u00a0"}different countries around the world compare. More detail on these, along with specific sample questions, are provided in the Project Goals section below.
            </p>
            <p className="mt-5"><mark className="bg-[#00ff00] text-black">TODO (include screenshot of app)</mark></p>
            <h2 className="mt-[33px] text-[22px] leading-[26px]">Project Goals</h2>
            <p className="mt-[15px]">
              Motivated by a shared interest in sports and data analysis, we chose to explore a complete dataset of the players in <i>FIFA 19</i>, a football simulation video game. This data was sourced from <a href="#kaggle" className="text-[#1155cc] underline">Kaggle</a> and provided by Karan Gadiya, a Master’s student studying Data Science at the University of Virginia.
            </p>
          </article>
          <div className="absolute top-[4px] right-[5px] h-[38px] w-[8px] rounded-full bg-[#dadce0]" />
          <button aria-label="Explore" className="absolute right-[16px] bottom-[7px] grid size-[38px] place-items-center rounded-[3px] border border-[#dadce0] bg-[#f9f9f9] shadow-sm">
            <Svg className="size-[24px]"><path d="M4 1h16a2 2 0 0 1 2 2v16a2 2 0 0 1-2 2h-5l-3 3-3-3H4a2 2 0 0 1-2-2V3a2 2 0 0 1 2-2z" fill="#6b6f73" /><path d="M12 4l2 5 5 2-5 2-2 5-2-5-5-2 5-2z" fill="#fff" /></Svg>
          </button>
        </div>
      </div>
      <aside className="flex w-[58px] shrink-0 flex-col items-center border-l border-[#dadce0] bg-white pt-[20px] text-[#5f6368]">
        <Calendar className="size-[20px]" day="31" />
        <Svg className="mt-[37px] size-[20px]"><path d="M2 2h20v15l-5 6H2z" fill="#fbbc04" /><path d="M17 23v-6h5z" fill="#fde293" /><path d="M9 14c-4-4-1-8 3-8s7 4 3 8zM9.500 17h5" fill="none" stroke="#fff" strokeWidth="1.500" /></Svg>
        <Svg className="mt-[37px] size-[22px]"><circle cx="12" cy="12" r="11.500" fill="#4285f4" /><circle cx="6.500" cy="12" r="2.200" fill="#fbbc04" /><path d="M10 16l7-8" stroke="#fff" strokeWidth="3.500" strokeLinecap="round" /></Svg>
        <span className="mt-[34px] h-px w-[20px] bg-[#e4e6e9]" />
        <button aria-label="Add-ons" className="mt-[36px]"><MdAdd className="size-[20px]" /></button>
        <button aria-label="Hide side panel" className="mt-auto mb-[18px]"><MdChevronRight className="size-[22px]" /></button>
      </aside>
    </div>
  );
}

function RightTaskbar() {
  return (
    <footer className="flex h-[41px] shrink-0 border-t border-[#a5a5a5] bg-[linear-gradient(to_right,#232323_30%,#383838_38%,#262626_48%,#2a2a2a_60%,#444_70%,#262626_82%,#242424)] text-white">
      <button aria-label="Start" className="grid w-[50px] place-items-center"><span className="size-[21px]"><Windows /></span></button>
      <label className="flex w-[353px] items-center gap-[11px] border border-[#c5c5c5] bg-[#f2f2f2] pl-[10px]">
        <span className="size-[20px]"><SearchGlass color="#333" /></span>
        <input aria-label="Search" placeholder="Type here to search" className="min-w-0 flex-1 bg-transparent text-[14px] outline-none placeholder:text-[#3c3c3c]" />
      </label>
      <div className="grid w-[617px] grid-cols-12">
        {[["Cortana", CortanaRing], ["Task View", TaskView]].map(([name, Icon]) => (
          <button key={name} aria-label={name} className="grid place-items-center"><span className="size-[20px]"><Icon /></span></button>
        ))}
        {Apps.map(({ name, Icon, running, active }) => (
          <button key={name} aria-label={name} className={active ? "grid grid-rows-[1fr_2px] justify-items-center bg-[#5c5c5c]" : "grid grid-rows-[1fr_2px] justify-items-center"}>
            <span className="size-[23px] self-center"><Icon /></span>
            <span className={active ? "w-full bg-[#76b9ed]" : running ? "w-[42px] bg-[#76b9ed]" : ""} />
          </button>
        ))}
      </div>
      <div className="ml-auto flex items-center">
        <div className="flex">
          <span className="grid w-[25px] place-items-center"><Svg className="size-[14px]"><path d="M2 17L12 7l10 10" fill="none" stroke="#fff" strokeWidth="2" /></Svg></span>
          <span className="grid w-[25px] place-items-center"><FaDropbox className="size-[16px]" /></span>
          <span className="grid w-[25px] place-items-center"><Svg className="size-[17px]"><path d="M6 8h15v9H6v-4" fill="none" stroke="#fff" strokeWidth="1.500" /><path d="M9 10h10v5H9zM21 10h2v4h-2zM2 4h5v4H2zM4 8v6" fill="#fff" stroke="#fff" strokeWidth=".6" /></Svg></span>
          <span className="grid w-[25px] place-items-center"><Svg className="size-[16px]"><path d="M2 21C2 10 11 3 22 3M7 22C7 14 13 8 22 8M12 22c0-5 4-9 10-9" fill="none" stroke="#aaa" strokeWidth="1.600" /><circle cx="19" cy="20" r="2.500" fill="#fff" /></Svg></span>
          <span className="grid w-[25px] place-items-center"><Svg className="size-[17px]"><path d="M2 9h4l6-6v18l-6-6H2z" fill="none" stroke="#fff" strokeWidth="1.400" /><path d="M15 9c1 2 1 4 0 6M18 7c2 3 2 7 0 10" fill="none" stroke="#fff" strokeWidth="1.200" /><path d="M21 5c3 4 3 10 0 14" fill="none" stroke="#888" strokeWidth="1.200" /></Svg></span>
        </div>
        <time className="flex w-[72px] flex-col items-center text-[12px] leading-[19px]"><span>5:54 PM</span><span>10/22/2020</span></time>
        <button aria-label="6 notifications" className="relative ml-[13px] h-[28px] w-[28px]">
          <Svg className="size-[20px]"><path d="M2 2h20v16H12l-4 5v-5H2z" fill="#fff" /><path d="M5 6h14M5 10h14M5 14h9" stroke="#333" strokeWidth="1.500" /></Svg>
          <span className="absolute right-0 bottom-0 grid size-[15px] place-items-center rounded-full border border-[#888] bg-[#2b2b2b] text-[11px] leading-none">6</span>
        </button>
        <span className="ml-[10px] mr-[4px] h-[40px] w-px bg-[#777]" />
      </div>
    </footer>
  );
}

export default function App() {
  return (
    <div className="flex h-screen min-h-[744px] w-full overflow-hidden bg-white [font-family:'Open_Sans','Noto_Sans',sans-serif]">
      <section className="flex min-w-0 flex-1 flex-col overflow-hidden">
        <LeftChrome />
        <div className="h-[2px] shrink-0 bg-linear-to-r from-[#f63366] to-[#fffd80]" />
        <Streamlit />
        <LeftTaskbar />
      </section>
      <section className="flex min-w-0 flex-1 flex-col overflow-hidden">
        <RightChrome />
        <DocsHeader />
        <Docs />
        <RightTaskbar />
      </section>
    </div>
  );
}
